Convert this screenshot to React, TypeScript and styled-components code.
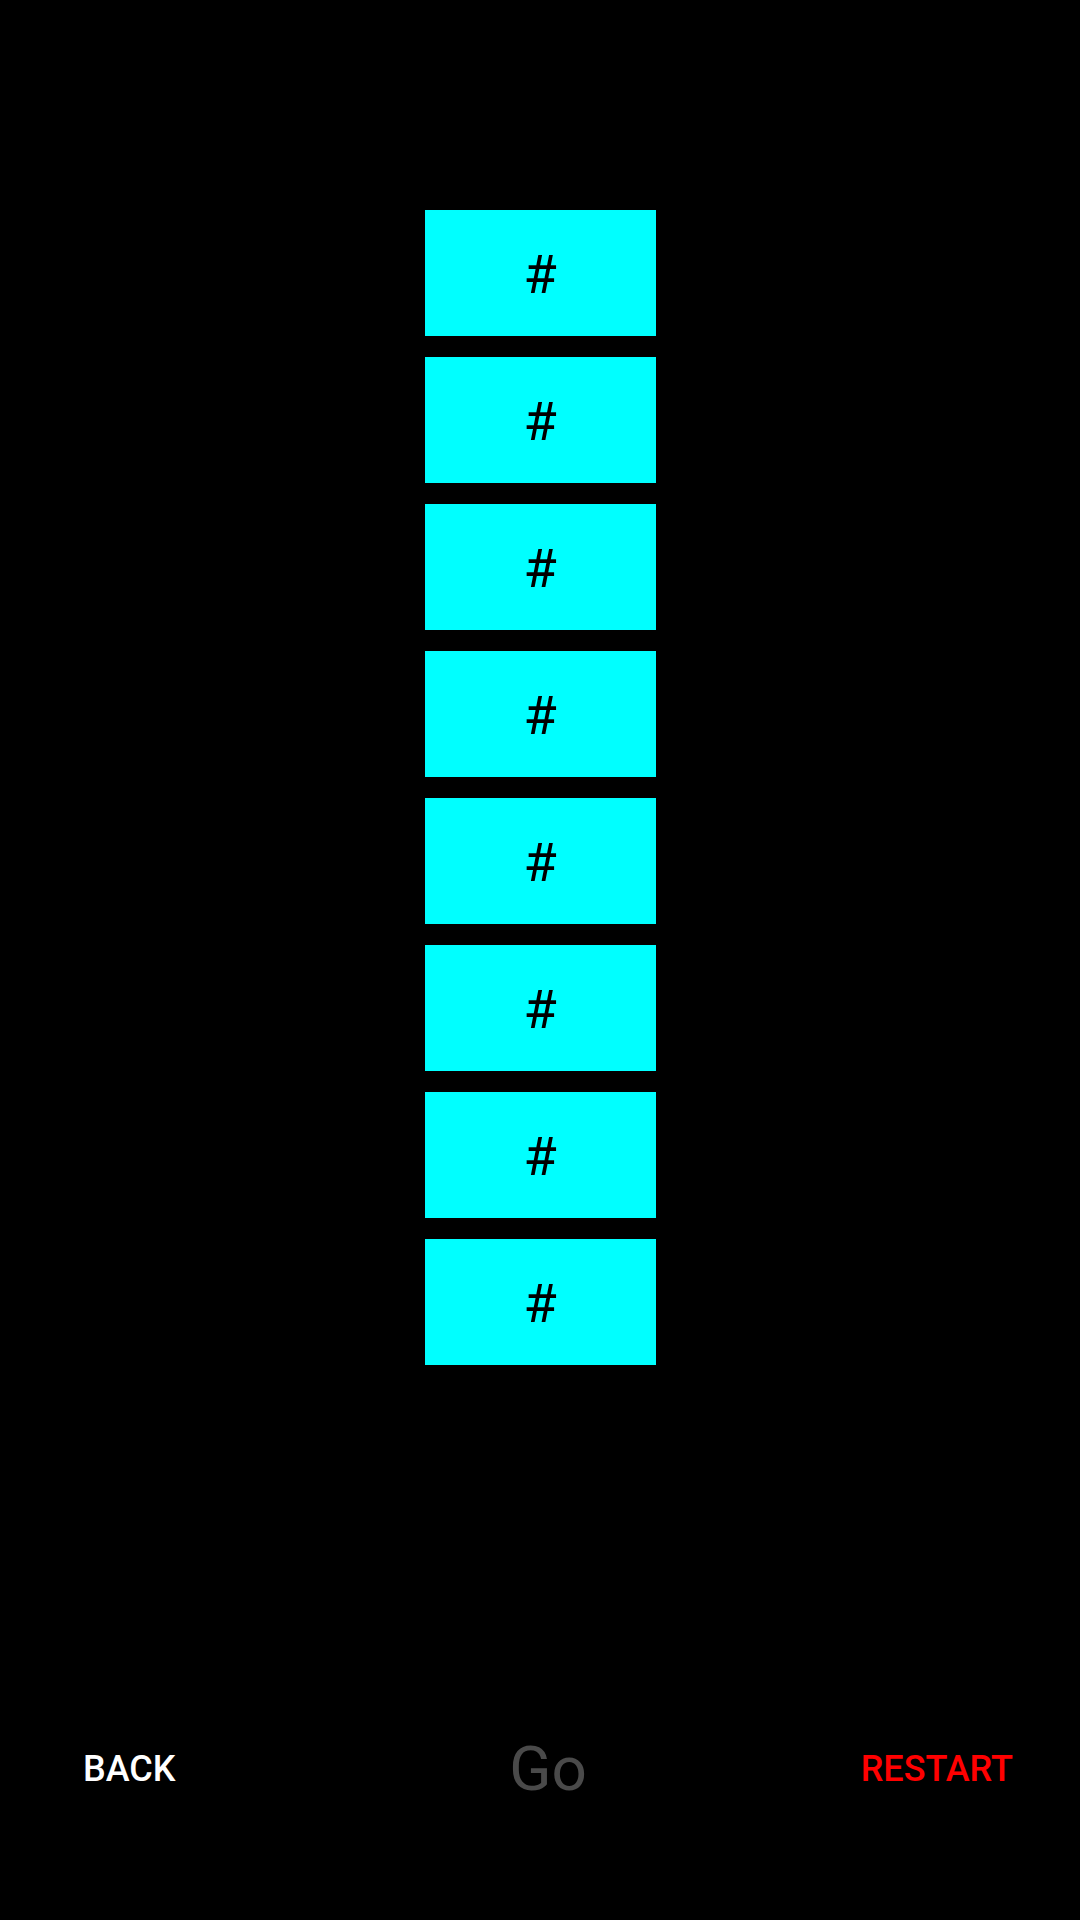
import styled, { createGlobalStyle } from "styled-components";

const GlobalStyle = createGlobalStyle`
  html, body {
    margin: 0;
    padding: 0;
    background: #000;
  }
  body {
    font-family: Roboto, "Liberation Sans", sans-serif;
  }
`;

const CELLS = ["#", "#", "#", "#", "#", "#", "#", "#"];

const App = () => {
  return (
    <>
      <GlobalStyle />
      <Screen>
        <Board>
          {CELLS.map((cell, idx) => (
            <Cell key={idx}>{cell}</Cell>
          ))}
        </Board>
        <Footer>
          <TextButton $color="#ffffff" $align="start">
            BACK
          </TextButton>
          <GoLabel>Go</GoLabel>
          <TextButton $color="#ff0000" $align="end">
            RESTART
          </TextButton>
        </Footer>
      </Screen>
    </>
  );
};

export default App;

const Screen = styled.div`
  width: 1080px;
  height: 1920px;
  background: #000;
  display: flex;
  flex-direction: column;
  box-sizing: border-box;
  padding-top: 210px;
`;

const Board = styled.div`
  display: flex;
  flex-direction: column;
  align-items: center;
  gap: 21px;
`;

const Cell = styled.div`
  width: 231px;
  height: 126px;
  box-sizing: border-box;
  padding-top: 4px;
  background: #00ffff;
  color: #000;
  display: flex;
  align-items: center;
  justify-content: center;
  font-size: 54px;
  line-height: 1;
`;

const Footer = styled.div`
  margin-top: auto;
  margin-bottom: 83px;
  height: 137px;
  display: grid;
  grid-template-columns: 1fr 1fr 1fr;
  align-items: center;
  padding: 0 67px 0 83px;
`;

const TextButton = styled.button<{ $color: string; $align: "start" | "end" }>`
  justify-self: ${(p) => p.$align};
  background: transparent;
  border: none;
  padding: 0;
  margin: 0;
  color: ${(p) => p.$color};
  font-family: Roboto, "Liberation Sans", sans-serif;
  font-weight: 500;
  font-size: 36px;
  line-height: 1;
  cursor: pointer;
`;

const GoLabel = styled.span`
  justify-self: center;
  color: #4a4a4a;
  font-size: 62px;
  line-height: 1;
`;
